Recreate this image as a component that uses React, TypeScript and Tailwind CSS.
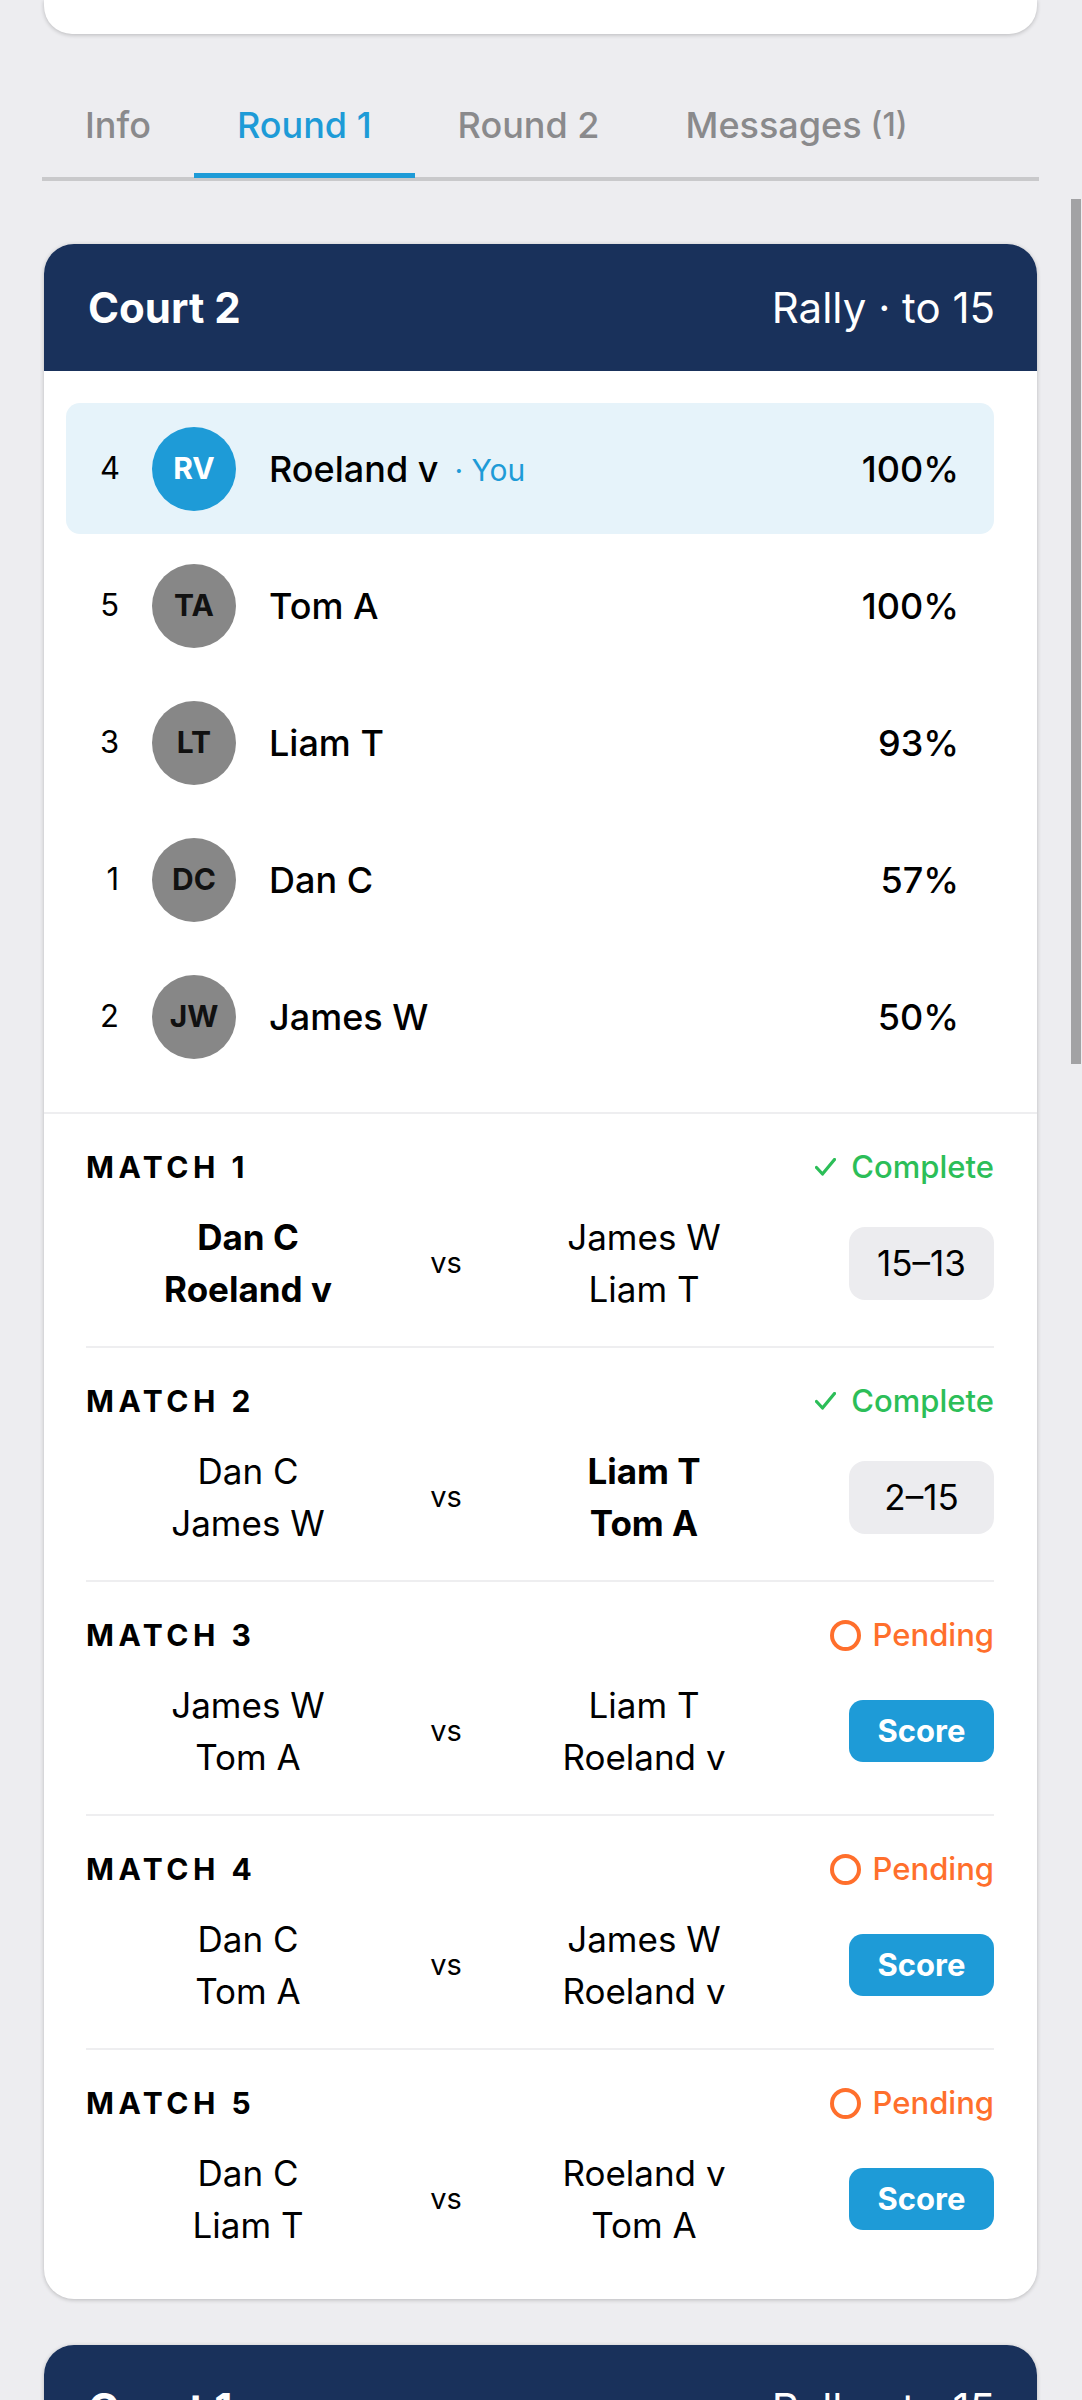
import React from 'react';

type Player = { rank: number; initials: string; name: string; pct: string; you?: boolean };
type Match = { n: number; a: string[]; b: string[]; winner?: 'a' | 'b'; score?: string };

const players: Player[] = [
  { rank: 4, initials: 'RV', name: 'Roeland v', pct: '100%', you: true },
  { rank: 5, initials: 'TA', name: 'Tom A', pct: '100%' },
  { rank: 3, initials: 'LT', name: 'Liam T', pct: '93%' },
  { rank: 1, initials: 'DC', name: 'Dan C', pct: '57%' },
  { rank: 2, initials: 'JW', name: 'James W', pct: '50%' },
];

const matches: Match[] = [
  { n: 1, a: ['Dan C', 'Roeland v'], b: ['James W', 'Liam T'], winner: 'a', score: '15–13' },
  { n: 2, a: ['Dan C', 'James W'], b: ['Liam T', 'Tom A'], winner: 'b', score: '2–15' },
  { n: 3, a: ['James W', 'Tom A'], b: ['Liam T', 'Roeland v'] },
  { n: 4, a: ['Dan C', 'Tom A'], b: ['James W', 'Roeland v'] },
  { n: 5, a: ['Dan C', 'Liam T'], b: ['Roeland v', 'Tom A'] },
];

const tabs = [
  { label: 'Info' },
  { label: 'Round 1', active: true },
  { label: 'Round 2' },
  { label: 'Messages', count: '(1)' },
];

function CourtHeader({ title }: { title: string }) {
  return (
    <div className="flex h-[127px] items-center justify-between bg-[#19315b] pl-[44px] pr-[42px] text-[42px] leading-none text-white">
      <span className="font-bold">{title}</span>
      <span>Rally · to 15</span>
    </div>
  );
}

function Status({ done }: { done: boolean }) {
  if (done) {
    return (
      <div className="flex items-center text-[31px] font-medium text-[#2cbe58]">
        <svg width="21" height="18" viewBox="0 0 21 18" className="mr-[15px]">
          <path d="M1.5 9.5 L7.5 16 L19.5 1.5" fill="none" stroke="#2cbe58" strokeWidth="3.2" strokeLinecap="round" strokeLinejoin="round" />
        </svg>
        <span>Complete</span>
      </div>
    );
  }
  return (
    <div className="flex items-center text-[31px] font-medium text-[#ff6f2c]">
      <span className="mr-[12px] h-[31px] w-[31px] rounded-full border-[4.5px] border-[#ff6f2c]" />
      <span>Pending</span>
    </div>
  );
}

function Team({ names, bold }: { names: string[]; bold: boolean }) {
  return (
    <div className={`flex-1 text-center text-[35px] leading-[52px] text-black ${bold ? 'font-bold' : ''}`}>
      {names.map((n) => (
        <div key={n}>{n}</div>
      ))}
    </div>
  );
}

export default function App() {
  return (
    <div className="relative h-[2400px] w-full overflow-hidden bg-[#ededf0] font-['Inter','Liberation_Sans',sans-serif] text-black">
      <div className="ml-[44px] mr-[45px]">
        {/* previous panel, scrolled mostly out of view */}
        <div className="h-[34px] rounded-b-[28px] bg-white shadow-[0_1px_4px_rgba(0,0,0,0.22)]" />

        {/* tab bar */}
        <div className="-mx-[2px] mt-[38px]">
          <div className="flex">
            {tabs.map((t) => (
              <div
                key={t.label}
                className={`flex h-[106px] items-center border-b-[5px] px-[43px] pt-[4px] text-[36px] font-medium ${
                  t.active ? 'border-[#1e9bd7] text-[#1e9bd7]' : 'border-transparent text-[#8a8a8c]'
                }`}
              >
                <span>{t.label}</span>
                {t.count && <span className="ml-[9px] text-[32px]">{t.count}</span>}
              </div>
            ))}
          </div>
          <div className="-mt-[1px] h-[4px] bg-[#c9c9cb]" />
        </div>

        {/* court card */}
        <div className="mt-[63px] overflow-hidden rounded-[30px] bg-white shadow-[0_1px_4px_rgba(0,0,0,0.22)]">
          <CourtHeader title="Court 2" />

          <div className="flex flex-col gap-[6px] pb-[30px] pl-[22px] pr-[43px] pt-[32px]">
            {players.map((p) => (
              <div
                key={p.initials}
                className={`flex h-[131px] items-center rounded-[14px] pl-[34px] pr-[35px] ${p.you ? 'bg-[#e6f3fa]' : ''}`}
              >
                <span className="w-[19px] text-right text-[31px]">{p.rank}</span>
                <div
                  className={`ml-[33px] flex h-[84px] w-[84px] items-center justify-center rounded-full text-[30px] font-bold ${
                    p.you ? 'bg-[#1e9bd7] text-white' : 'bg-[#878787] text-[#111]'
                  }`}
                >
                  {p.initials}
                </div>
                <span className="ml-[33px] text-[36px] font-medium">{p.name}</span>
                {p.you && <span className="ml-[16px] pt-[4px] text-[30px] text-[#1e9bd7]">· You</span>}
                <span className="ml-auto text-[36px] font-medium">{p.pct}</span>
              </div>
            ))}
          </div>

          <div className="border-t-2 border-[#eeeef0] pb-[17px] pl-[42px] pr-[43px]">
            {matches.map((m, i) => (
              <div
                key={m.n}
                className={`pb-[31px] pt-[37px] ${i < matches.length - 1 ? 'border-b-2 border-[#eeeef0]' : ''}`}
              >
                <div className="flex h-[32px] items-center justify-between">
                  <span className="text-[30px] font-bold tracking-[4.5px]">MATCH {m.n}</span>
                  <Status done={!!m.score} />
                </div>
                <div className="mt-[28px] flex items-center">
                  <Team names={m.a} bold={m.winner === 'a'} />
                  <div className="w-[72px] text-center text-[29px]">vs</div>
                  <Team names={m.b} bold={m.winner === 'b'} />
                  <div className="ml-[43px] w-[145px]">
                    {m.score ? (
                      <div className="flex h-[73px] items-center justify-center rounded-[16px] bg-[#ececef] text-[35px]">
                        {m.score}
                      </div>
                    ) : (
                      <button className="flex h-[62px] w-full items-center justify-center rounded-[14px] bg-[#1e9bd7] text-[31px] font-bold text-white">
                        Score
                      </button>
                    )}
                  </div>
                </div>
              </div>
            ))}
          </div>
        </div>

        {/* next court card */}
        <div className="mt-[46px] overflow-hidden rounded-[30px] bg-white shadow-[0_1px_4px_rgba(0,0,0,0.22)]">
          <CourtHeader title="Court 1" />
        </div>
      </div>

      {/* overlay scrollbar */}
      <div className="absolute right-[1px] top-[199px] h-[865px] w-[10px] bg-[#a2a2a4]" />
    </div>
  );
}
